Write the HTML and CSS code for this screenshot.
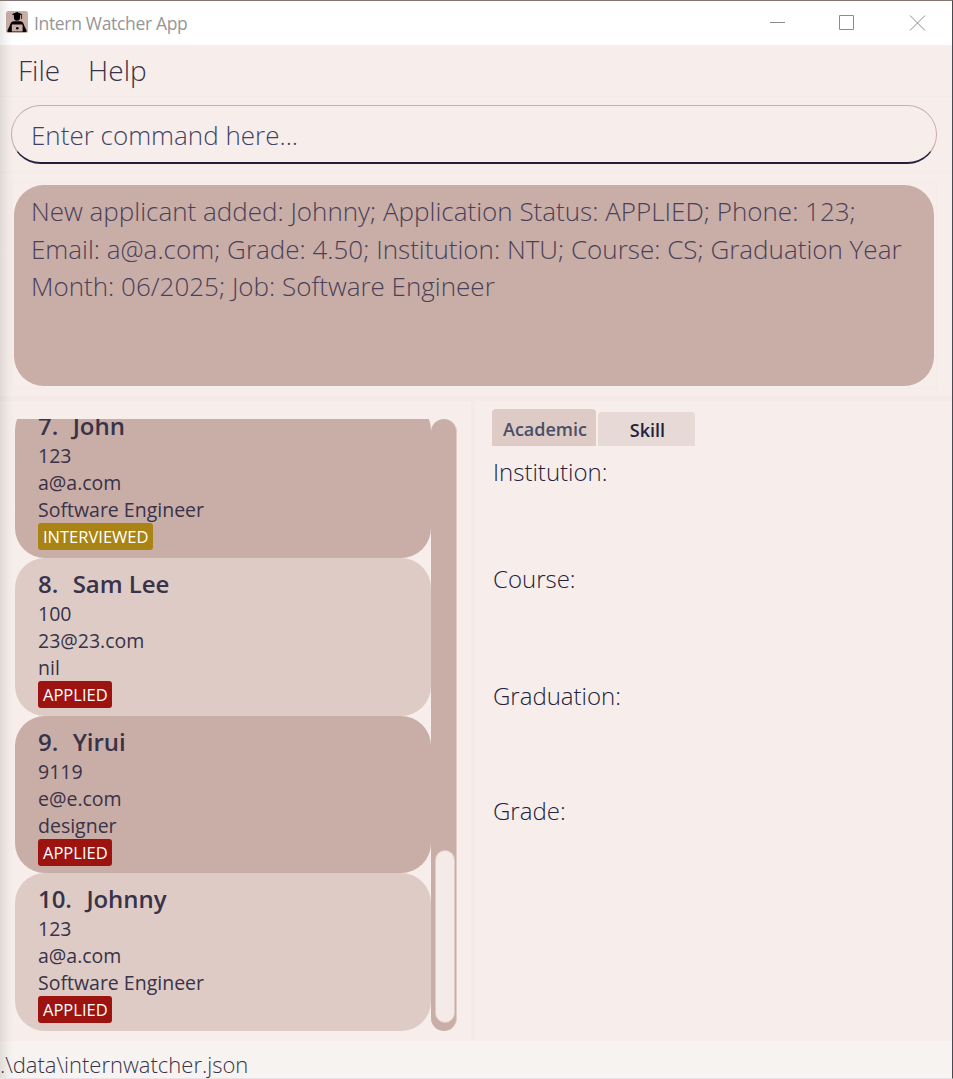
FILE: index.html
```
<!DOCTYPE html>
<html lang="en">
<head>
<meta charset="utf-8">
<title>Intern Watcher App</title>
<link rel="stylesheet" href="styles.css">
</head>
<body>
<div class="window">
  <header class="titlebar">
    <svg class="app-icon" width="22" height="22" viewBox="0 0 22 22">
      <rect width="22" height="22" rx="2.5" fill="#c9ada7"/>
      <path d="M11 1 5.700 3.200 11 5.400l5.300-2.200z"/>
      <path d="M15.600 3.200V8" stroke="#000" stroke-width=".8"/>
      <path d="M7.900 4v2.200a3.100 3.600 0 0 0 6.200 0V4z"/>
      <path d="M7.500 10.300h7c2.300 .5 3.200 2.200 3.800 4.500l2.300 4.700c.2 1-.2 1.600-1 1.600H2.400c-.8 0-1.200-.6-1-1.600l2.300-4.700c.6-2.300 1.500-4 3.800-4.500z"/>
      <rect x="5.800" y="13.500" width="10.800" height="7.100" rx=".6" fill="#c9ada7"/>
      <circle cx="11.300" cy="17.200" r="1.300"/>
    </svg>
    <span class="title">Intern Watcher App</span>
    <svg class="controls" width="156" height="16" viewBox="0 0 156 16" fill="none" stroke="#8c8c8c">
      <path d="M0 7.500h15M69.500 .5h14v14h-14zM140 .5l15 15M155 .5l-15 15"/>
    </svg>
  </header>
  <nav class="menubar"><span class="file">File</span><span class="help">Help</span></nav>
  <section class="command"><div class="field"><span>Enter command here...</span></div></section>
  <section class="result"><div class="result-frame"><div class="result-box">
    <div class="r1">New applicant added: Johnny; Application Status: APPLIED; Phone: 123;</div>
    <div class="r2">Email: a@a.com; Grade: 4.50; Institution: NTU; Course: CS; Graduation Year</div>
    <div class="r3">Month: 06/2025; Job: Software Engineer</div>
  </div></div></section>
  <main class="split">
    <section class="list-pane">
      <div class="list">
        <div class="card dark"><div class="name"><span>7.</span><span>John</span></div><p>123</p><p>a@a.com</p><p>Software Engineer</p><span class="tag interviewed">INTERVIEWED</span></div>
        <div class="card"><div class="name"><span>8.</span><span>Sam Lee</span></div><p>100</p><p>23@23.com</p><p>nil</p><span class="tag">APPLIED</span></div>
        <div class="card dark"><div class="name"><span>9.</span><span>Yirui</span></div><p>9119</p><p>e@e.com</p><p>designer</p><span class="tag">APPLIED</span></div>
        <div class="card"><div class="name"><span>10.</span><span>Johnny</span></div><p>123</p><p>a@a.com</p><p>Software Engineer</p><span class="tag">APPLIED</span></div>
      </div>
      <div class="scrollbar"><div class="thumb"></div></div>
    </section>
    <section class="details">
      <div class="tabs"><div class="tab active">Academic</div><div class="tab">Skill</div></div>
      <dl>
        <dt class="institution">Institution:</dt>
        <dt class="course">Course:</dt>
        <dt class="graduation">Graduation:</dt>
        <dt class="grade">Grade:</dt>
      </dl>
    </section>
  </main>
  <footer class="status">.\data\internwatcher.json</footer>
</div>
</body>
</html>
```
FILE: styles.css
```
* { box-sizing: border-box; }
body { margin: 0; font-family: "Open Sans", "Noto Sans", sans-serif; color: #383349; }
.window {
  position: relative;
  width: 953px; height: 1079px;
  display: flex; flex-direction: column;
  background: #f7eeeb;
  border-top: 1px solid #857372;
  border-right: 1px solid #4b4850;
  border-bottom: 1px solid #e8e3e6;
  overflow: hidden;
  white-space: nowrap;
}
/* soft shadow cast on the left edge */
.window::after {
  content: ""; position: absolute; left: 0; top: 0; bottom: 0; width: 14px;
  background: linear-gradient(90deg, rgba(70,75,65,.13), rgba(70,75,65,.03) 60%, transparent);
}
.titlebar { height: 44px; flex: none; display: flex; align-items: flex-start; background: #fff; padding: 10px 26px 0 6px; }
.app-icon { flex: none; }
.title { font-size: 17.500px; letter-spacing: -.33px; line-height: 24px; color: #969696; margin-left: 6px; }
.controls { margin: 4px 0 0 auto; }
.menubar { height: 52px; flex: none; display: flex; gap: 28px; padding: 5px 18px 0; font-size: 28px; line-height: 40px; font-weight: 300; border-bottom: 1px solid #f4eae7; }
.command { height: 76px; flex: none; padding: 8px 15px 0 11px; border-bottom: 1px solid #f4eae7; }
.field {
  height: 59px; border: 1.500px solid #c9ada7; border-bottom: 2px solid #22223b; border-radius: 30px;
  padding: 11px 19px; font-size: 26px; line-height: 36px; font-weight: 300; color: #3f4466;
}
.result { height: 228px; flex: none; padding: 9px 15px 0 11px; border-bottom: 5px solid #f5eae8; }
.result-frame { height: 207px; border: 1px solid #f4eae7; padding: 2px; }
.result-box { height: 201px; background: #c9ada7; border-radius: 30px; padding: 8px 17px; font-size: 26px; line-height: 37.500px; font-weight: 300; color: #4a4158; }
.split { height: 640px; flex: none; display: flex; }
.list-pane { width: 475px; flex: none; display: flex; padding: 18px 0 10px 15px; border-right: 4px solid #f5eae8; }
.list { width: 416px; height: 612px; overflow: hidden; display: flex; flex-direction: column; justify-content: flex-end; }
.card { height: 157.670px; flex: none; background: #decbc6; border-radius: 30px; padding: 9px 23px; font-size: 19.500px; line-height: 27px; }
.card.dark { background: #c9ada7; }
.name { display: flex; gap: 14.500px; height: 33px; font-size: 24px; line-height: 34px; letter-spacing: -.05px; font-weight: 600; }
.card p { margin: 0; }
.tag { display: block; width: 74px; height: 27px; border-radius: 3px; background: #9d1310; color: #fff; font-size: 16.500px; line-height: 27px; padding-left: 5px; }
.tag.interviewed { width: 115px; background: #a98414; }
.scrollbar { width: 26px; height: 612px; background: #c9ada7; border-right: 1px solid #decbc6; border-radius: 13px; display: flex; align-items: flex-end; padding: 0 1px 8px 4px; }
.thumb { width: 20px; height: 173px; background: #f4eae7; border: 1px solid #decbc6; border-radius: 10px; }
.details { flex: 1; padding: 8px 0 0 17px; }
.tabs { display: flex; align-items: flex-end; gap: 2px; height: 37px; font-size: 18px; font-weight: 600; }
.tab { width: 97px; height: 34px; line-height: 36px; padding-left: 2px; text-align: center; background: #e6d9d6; border-radius: 4px 4px 0 0; color: #22223b; }
.tab.active { width: 104px; height: 37px; line-height: 40px; background: #decbc6; color: #4a4e69; }
dl { margin: 0; padding: 9px 0 0 1px; display: flex; flex-direction: column; font-size: 24px; line-height: 34px; font-weight: 300; color: #22223b; }
.institution { height: 107px; }
.course { height: 117px; }
.graduation { height: 115px; }
.status { flex: 1; background: #f7f3f0; font-size: 22px; line-height: 46px; font-weight: 300; }
```
